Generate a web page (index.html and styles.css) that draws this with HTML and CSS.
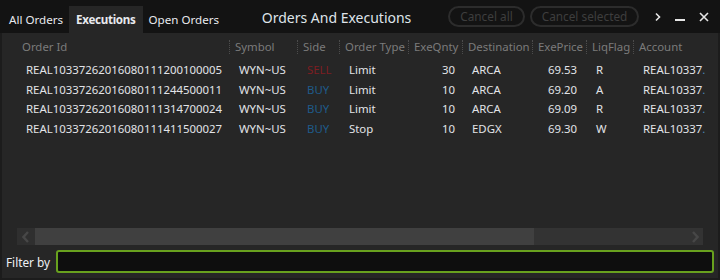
FILE: index.html
```html
<!doctype html>
<html lang="en">
	<head>
		<meta charset="UTF-8" />
		<title>Orders And Executions</title>
		<link rel="stylesheet" href="styles.css">
	</head>
	<body>
		<div class="window">
			<div class="titlebar">
				<div class="tabs">
					<span class="tab">All Orders</span>
					<span class="tab active">Executions</span>
					<span class="tab">Open Orders</span>
				</div>
				<div class="title">Orders And Executions</div>
				<div class="actions">
					<button class="pill cancel-all">Cancel all</button>
					<button class="pill cancel-sel">Cancel selected</button>
					<span class="ctl more">
						<svg width="8" height="10" viewBox="0 0 8 10"><path d="M2 1.5 L5.5 5 L2 8.5" fill="none" stroke="#e6e6e6" stroke-width="1.6"/></svg>
					</span>
					<span class="ctl min">
						<svg width="10" height="10" viewBox="0 0 10 10"><rect x="0" y="7" width="10" height="2" fill="#e6e6e6"/></svg>
					</span>
					<span class="ctl close">
						<svg width="10" height="10" viewBox="0 0 10 10"><path d="M1 1 L9 9 M9 1 L1 9" stroke="#e6e6e6" stroke-width="1.6"/></svg>
					</span>
				</div>
			</div>

			<div class="content">
				<div class="grid">
					<div class="row head">
						<div class="cell">Order Id</div>
						<div class="cell sep">Symbol</div>
						<div class="cell sep">Side</div>
						<div class="cell sep">Order Type</div>
						<div class="cell sep">ExeQnty</div>
						<div class="cell sep">Destination</div>
						<div class="cell sep">ExePrice</div>
						<div class="cell sep">LiqFlag</div>
						<div class="cell sep">Account</div>
					</div>
					<div class="row">
						<div class="cell">REAL10337262016080111200100005</div>
						<div class="cell">WYN~US</div>
						<div class="cell sell">SELL</div>
						<div class="cell">Limit</div>
						<div class="cell num qty">30</div>
						<div class="cell">ARCA</div>
						<div class="cell num price">69.53</div>
						<div class="cell">R</div>
						<div class="cell">REAL10337<span class="trim">.</span></div>
					</div>
					<div class="row">
						<div class="cell">REAL10337262016080111244500011</div>
						<div class="cell">WYN~US</div>
						<div class="cell buy">BUY</div>
						<div class="cell">Limit</div>
						<div class="cell num qty">10</div>
						<div class="cell">ARCA</div>
						<div class="cell num price">69.20</div>
						<div class="cell">A</div>
						<div class="cell">REAL10337<span class="trim">.</span></div>
					</div>
					<div class="row">
						<div class="cell">REAL10337262016080111314700024</div>
						<div class="cell">WYN~US</div>
						<div class="cell buy">BUY</div>
						<div class="cell">Limit</div>
						<div class="cell num qty">10</div>
						<div class="cell">ARCA</div>
						<div class="cell num price">69.09</div>
						<div class="cell">R</div>
						<div class="cell">REAL10337<span class="trim">.</span></div>
					</div>
					<div class="row">
						<div class="cell">REAL10337262016080111411500027</div>
						<div class="cell">WYN~US</div>
						<div class="cell buy">BUY</div>
						<div class="cell">Stop</div>
						<div class="cell num qty">10</div>
						<div class="cell">EDGX</div>
						<div class="cell num price">69.30</div>
						<div class="cell">W</div>
						<div class="cell">REAL10337<span class="trim">.</span></div>
					</div>
				</div>

				<div class="hscroll">
					<div class="arrow left">
						<svg width="8" height="12" viewBox="0 0 8 12"><path d="M6 1 L1.5 6 L6 11" fill="none" stroke="#474747" stroke-width="2.4"/></svg>
					</div>
					<div class="thumb"></div>
					<div class="track">
						<svg width="8" height="12" viewBox="0 0 8 12"><path d="M2 1 L6.5 6 L2 11" fill="none" stroke="#474747" stroke-width="2.4"/></svg>
					</div>
				</div>

				<div class="filter">
					<label for="filter">Filter by</label>
					<input type="text" id="filter" />
				</div>
			</div>
		</div>
	</body>
</html>
```

FILE: styles.css
```css
html,
body {
	margin: 0;
	padding: 0;
	background-color: #1c1c1c;
}
body {
	font-family: 'Noto Sans', 'Open Sans', sans-serif;
	font-size: 11.4px;
	color: #e2e4e8;
}
.window {
	width: 720px;
	height: 280px;
	display: flex;
	flex-direction: column;
	background-color: #1c1c1c;
}
.titlebar {
	height: 33px;
	display: flex;
	align-items: stretch;
	background-color: #131313;
}
.tabs {
	display: flex;
	align-items: flex-end;
	padding-left: 3px;
}
.tab {
	height: 27px;
	line-height: 27px;
	padding: 0 6px;
	font-size: 11.6px;
	color: #e8eaee;
}
.tab.active {
	background-color: #262626;
	font-weight: bold;
	padding: 0 7px;
	letter-spacing: -0.3px;
}
.title {
	flex: 1;
	text-align: center;
	font-size: 14px;
	line-height: 35px;
	color: #dfe4ea;
	padding-left: 0;
	white-space: nowrap;
}
.actions {
	display: flex;
	align-items: center;
	padding-right: 11px;
}
.pill {
	height: 21px;
	border: 2px solid #2c2c2c;
	border-radius: 11px;
	background: transparent;
	color: #3e3e3e;
	font-family: inherit;
	font-size: 11.8px;
	line-height: 15px;
	padding: 0;
	margin-right: 5px;
	white-space: nowrap;
	cursor: default;
}
.cancel-all {
	width: 77px;
}
.cancel-sel {
	width: 109px;
	margin-right: 14px;
}
.ctl {
	display: flex;
	align-items: center;
	justify-content: center;
	height: 20px;
}
.more {
	width: 10px;
	margin-right: 12px;
}
.min {
	width: 10px;
	margin-right: 14px;
}
.close {
	width: 10px;
}
.content {
	flex: 1;
	display: flex;
	flex-direction: column;
	margin: 0 2px 2px;
	background-color: #262626;
}
.grid {
	flex: 1;
	padding: 7px 0 0 14px;
	overflow: hidden;
}
.row {
	display: grid;
	grid-template-columns: 213px 68px 42px 69px 54px 70px 54px 47px 90px;
	height: 19.7px;
	line-height: 19.7px;
	white-space: nowrap;
}
.row .cell {
	padding-left: 10px;
	overflow: hidden;
}
.row.head {
	height: 14px;
	line-height: 14px;
	margin-bottom: 6px;
	color: #7b7b7b;
}
.row.head .cell {
	padding-left: 6px;
}
.row.head .sep {
	border-left: 1px dotted #4c4c4c;
	padding-left: 5px;
}
.row .num {
	text-align: right;
	padding-left: 0;
}
.qty {
	padding-right: 7px;
}
.price {
	padding-right: 9px;
}
.sell {
	color: #7e1d22;
}
.buy {
	color: #1f5b8a;
}
.trim {
	color: #4d86b8;
}
.hscroll {
	height: 17px;
	margin: 0 15px;
	display: flex;
}
.arrow {
	width: 18px;
	background-color: #2f2f2f;
	display: flex;
	align-items: center;
	justify-content: center;
}
.thumb {
	width: 499px;
	background-color: #404040;
}
.track {
	flex: 1;
	background-color: #333333;
	display: flex;
	align-items: center;
	justify-content: flex-end;
	padding-right: 4px;
}
.filter {
	height: 33px;
	display: flex;
	align-items: center;
	padding: 0 4px;
}
.filter label {
	color: #eef0f4;
	width: 50px;
	font-size: 11.8px;
}
.filter input {
	flex: 1;
	height: 19px;
	border: 2px solid #68a11e;
	border-radius: 3px;
	background-color: #0e0e0e;
	color: #eee;
	outline: none;
	padding: 0 4px;
}
```
